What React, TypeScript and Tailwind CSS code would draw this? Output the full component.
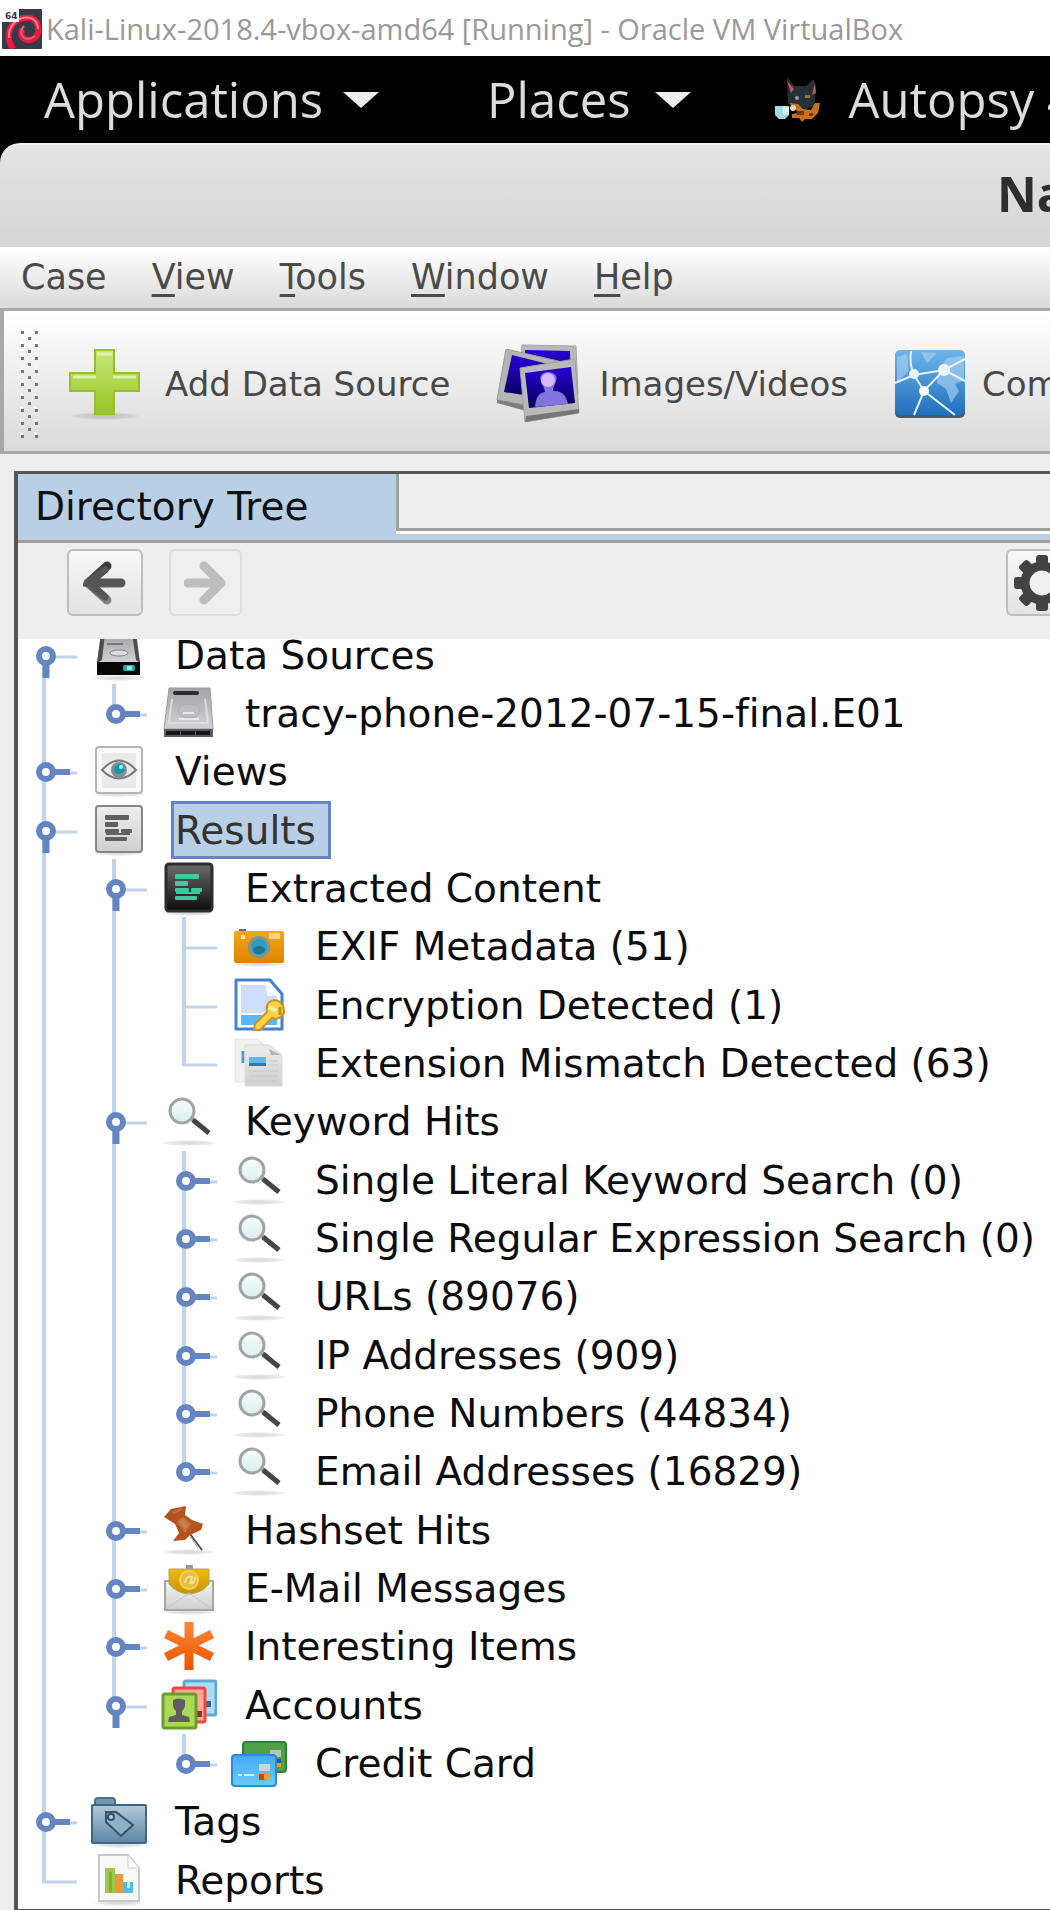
import React from "react";

type IconKey =
  | "drive" | "disk" | "eye" | "results" | "terminal" | "camera" | "key" | "docs"
  | "search" | "pin" | "mail" | "star" | "accounts" | "cards" | "tags" | "report";

type Connector = "open" | "closed" | "leaf";

interface Row {
  label: string;
  icon: IconKey;
  connector: Connector;
  guides: boolean[];
  last?: boolean;
  first?: boolean;
  selected?: boolean;
}

const rows: Row[] = [
  { label: "Data Sources", icon: "drive", connector: "open", guides: [], first: true },
  { label: "tracy-phone-2012-07-15-final.E01", icon: "disk", connector: "closed", guides: [true], last: true },
  { label: "Views", icon: "eye", connector: "closed", guides: [] },
  { label: "Results", icon: "results", connector: "open", guides: [], selected: true },
  { label: "Extracted Content", icon: "terminal", connector: "open", guides: [true] },
  { label: "EXIF Metadata (51)", icon: "camera", connector: "leaf", guides: [true, true] },
  { label: "Encryption Detected (1)", icon: "key", connector: "leaf", guides: [true, true] },
  { label: "Extension Mismatch Detected (63)", icon: "docs", connector: "leaf", guides: [true, true], last: true },
  { label: "Keyword Hits", icon: "search", connector: "open", guides: [true] },
  { label: "Single Literal Keyword Search (0)", icon: "search", connector: "closed", guides: [true, true] },
  { label: "Single Regular Expression Search (0)", icon: "search", connector: "closed", guides: [true, true] },
  { label: "URLs (89076)", icon: "search", connector: "closed", guides: [true, true] },
  { label: "IP Addresses (909)", icon: "search", connector: "closed", guides: [true, true] },
  { label: "Phone Numbers (44834)", icon: "search", connector: "closed", guides: [true, true] },
  { label: "Email Addresses (16829)", icon: "search", connector: "closed", guides: [true, true], last: true },
  { label: "Hashset Hits", icon: "pin", connector: "closed", guides: [true] },
  { label: "E-Mail Messages", icon: "mail", connector: "closed", guides: [true] },
  { label: "Interesting Items", icon: "star", connector: "closed", guides: [true] },
  { label: "Accounts", icon: "accounts", connector: "open", guides: [true], last: true },
  { label: "Credit Card", icon: "cards", connector: "closed", guides: [true, false], last: true },
  { label: "Tags", icon: "tags", connector: "closed", guides: [] },
  { label: "Reports", icon: "report", connector: "leaf", guides: [], last: true },
];

function Shadow({ y = 51 }: { y?: number }) {
  return <ellipse cx="28" cy={y} rx="28" ry="3" fill="url(#shadow)" />;
}

function TextLines({ fill }: { fill: string }) {
  return (
    <g fill={fill}>
      <rect x="14" y="13" width="24" height="5" rx="1" />
      <rect x="14" y="20" width="13" height="5" rx="1" />
      <rect x="14" y="27" width="14" height="4" rx="1" />
      <rect x="30" y="27" width="11" height="4" rx="1" />
      <rect x="15" y="31" width="24" height="2" />
      <rect x="14" y="35" width="22" height="4" rx="1" />
    </g>
  );
}

function Person({ x, y }: { x: number; y: number }) {
  return (
    <path
      d="M5 1 Q11 -2 17 1 Q18 9 14 12 L14 16 L21 18 L22 23 L0 23 L1 18 L8 16 L8 12 Q4 9 5 1Z"
      fill="#5f5c66"
      transform={`translate(${x} ${y})`}
    />
  );
}

const art: Record<IconKey, React.ReactNode> = {
  drive: (
    <>
      <Shadow />
      <path d="M10 6 L45 6 L49 36 L6 36Z" fill="url(#steel)" />
      <path d="M10 6 L14 6 L11 33 L6 36Z M45 6 L41 6 L45 33 L49 36Z" fill="#4b4b50" />
      <path d="M16 17h16" stroke="#77777b" strokeWidth="2" />
      <ellipse cx="28" cy="26" rx="9" ry="3" fill="#dcdce0" stroke="#85858a" />
      <path d="M6 35h43v13H6z" fill="#050607" />
      <rect x="32" y="38" width="12" height="6" rx="2" fill="#2fa9ab" />
      <rect x="36" y="39" width="5" height="4" fill="#7df0ea" />
    </>
  ),
  disk: (
    <>
      <path d="M8 3 L49 3 L52 44 L3 44Z" fill="url(#steel)" stroke="#9c9ca0" />
      <path d="M14 8h22" stroke="#2e2e31" strokeWidth="4" strokeLinecap="round" />
      <path d="M11 14 L8 38 L47 38 L44 14" fill="none" stroke="#dedee2" strokeWidth="2" />
      <ellipse cx="28" cy="26" rx="11" ry="7" fill="#bcbcc1" stroke="#aeaeb3" />
      <path d="M22 28h11M18 34h20" stroke="#e8e8eb" strokeWidth="2" />
      <path d="M3 44h49v8H3z" fill="#5c5c60" />
      <path d="M5 48h45" stroke="#161618" strokeWidth="4" strokeDasharray="14 1" />
    </>
  ),
  eye: (
    <>
      <Shadow />
      <rect x="5" y="4" width="46" height="46" rx="3" fill="#fafafa" stroke="#b4b4b4" strokeWidth="2" />
      <rect x="11" y="10" width="34" height="35" fill="#eaeaea" />
      <path d="M11 27 Q28 8 45 27 Q28 44 11 27Z" fill="#e8ecec" stroke="#757b7c" strokeWidth="2" />
      <circle cx="28" cy="27" r="8" fill="#858c8f" />
      <circle cx="28" cy="26" r="5" fill="#129ab2" />
      <circle cx="30" cy="24" r="2" fill="#9ff5ff" />
    </>
  ),
  results: (
    <>
      <Shadow />
      <rect x="5" y="4" width="46" height="46" rx="3" fill="url(#greybox)" stroke="#858585" strokeWidth="2" />
      <TextLines fill="#606060" />
    </>
  ),
  terminal: (
    <>
      <Shadow y={53} />
      <rect x="5" y="4" width="46" height="47" rx="3" fill="url(#darkbox)" stroke="#2d2d2d" strokeWidth="3" />
      <g transform="translate(0 1)"><TextLines fill="#3fc79d" /></g>
    </>
  ),
  camera: (
    <>
      <Shadow y={46} />
      <rect x="8" y="11" width="7" height="4" fill="#6e6a55" />
      <rect x="3" y="13" width="50" height="32" rx="2" fill="url(#orange)" />
      <rect x="38" y="15" width="11" height="6" rx="1" fill="#fbd28c" />
      <rect x="10" y="17" width="4" height="4" fill="#ffe5b0" />
      <circle cx="28" cy="29" r="11" fill="#7c9795" />
      <circle cx="28" cy="29" r="8" fill="#2f9bc0" />
      <ellipse cx="28" cy="32" rx="6" ry="4" fill="#1e7796" />
    </>
  ),
  key: (
    <>
      <path d="M5 3 H39 L51 17 V52 H5Z" fill="#fff" stroke="#4481cb" strokeWidth="3" strokeLinejoin="round" />
      <path d="M10 8 H34 L46 20 V36 H10Z" fill="#cddffc" />
      <path d="M10 38h36v10H10z" fill="#58b7f8" />
      <path d="M35 7 L46 19 H36Z" fill="#f5f9ff" />
      <path d="M24 47 L36 35 Q34 24 44 23 Q54 25 53 36 Q48 44 41 41 L29 53 H23Z" fill="#f7d442" stroke="#cf912b" strokeWidth="2" />
      <path d="M38 30 L45 34" stroke="#fff2a0" strokeWidth="4" />
      <path d="M49 30 v8" stroke="#c48736" strokeWidth="3" />
    </>
  ),
  docs: (
    <>
      <path d="M4 4 H26 L37 13 V47 H4Z" fill="#f1f1f1" stroke="#e2e2e2" />
      <path d="M12 16v12" stroke="#4b9fd0" strokeWidth="3" />
      <path d="M14 10 H38 L51 20 V51 H14Z" fill="url(#greybox)" stroke="#dadada" />
      <path d="M38 14 L40 20 L50 20" fill="#b5b5b5" />
      <path d="M18 22h17v9H18z" fill="#62b7e6" />
      <path d="M18 28h17v3H18z" fill="#39799e" />
      <path d="M37 26h10M37 30h10M18 36h29M18 41h29M18 46h29" stroke="#c6c6c6" strokeWidth="1" />
    </>
  ),
  search: (
    <>
      <Shadow y={50} />
      <path d="M30 25 L35 29" stroke="#999" strokeWidth="4" />
      <path d="M32 27 L48 40" stroke="#454545" strokeWidth="5" />
      <circle cx="21" cy="18" r="12" fill="url(#glass)" stroke="#a0a5a4" strokeWidth="3" />
    </>
  ),
  pin: (
    <>
      <Shadow y={50} />
      <path d="M29 32 L41 48" stroke="#555" strokeWidth="2" />
      <path d="M29 34 L37 46" stroke="#aaa" strokeWidth="1" />
      <path d="M3 15 L10 7 L25 4 L24 13 L31 18 L42 22 L40 28 L29 33 L24 38 L12 39 L18 31 L14 22Z" fill="#b4531e" />
      <path d="M12 11 L21 7 M17 20 L22 16 L29 22 L24 29Z" fill="#cb7e50" stroke="#c3703f" strokeWidth="2" />
    </>
  ),
  mail: (
    <>
      <Shadow y={52} />
      <rect x="4" y="21" width="48" height="29" fill="url(#paper)" stroke="#a5a5a5" strokeWidth="2" />
      <rect x="25" y="5" width="7" height="4" fill="#999" />
      <path d="M8 9 H48 V24 Q41 33 28 34 Q15 33 8 24Z" fill="url(#gold)" stroke="#b8a356" strokeWidth="1" />
      <circle cx="28" cy="20" r="9" fill="#e6bd36" stroke="#efd06a" strokeWidth="2" />
      <path d="M24 23 Q25 15 31 17 L29 23 Q34 24 34 17" fill="none" stroke="#f8e294" strokeWidth="2" />
      <path d="M5 49 L28 33 L51 49" fill="none" stroke="#c3c3c3" strokeWidth="1" />
    </>
  ),
  star: (
    <path
      d="M28 4 V52 M5 16 L51 39 M51 16 L5 39"
      stroke="url(#flame)" strokeWidth="9" fill="none"
    />
  ),
  accounts: (
    <>
      <rect x="23" y="4" width="32" height="34" rx="2" fill="#a9ddf7" stroke="#5da7d2" strokeWidth="3" />
      <rect x="44" y="24" width="6" height="6" fill="#38677e" />
      <rect x="12" y="11" width="32" height="34" rx="2" fill="#ffa898" stroke="#f3473d" strokeWidth="3" />
      <rect x="35" y="34" width="6" height="6" fill="#7a3a3a" />
      <rect x="2" y="17" width="33" height="34" rx="2" fill="#aada55" stroke="#6b9c2d" strokeWidth="3" />
      <Person x={7} y={22} />
    </>
  ),
  cards: (
    <>
      <rect x="12" y="7" width="43" height="30" rx="3" fill="#4da248" stroke="#2d8033" strokeWidth="2" />
      <rect x="39" y="15" width="11" height="7" fill="#b4c8b3" />
      <path d="M45 24h5v4h-5z" fill="#1f55a0" />
      <path d="M45 28h5v4h-5z" fill="#f0a020" />
      <rect x="1" y="20" width="44" height="31" rx="3" fill="url(#bluecard)" stroke="#3389cd" strokeWidth="2" />
      <rect x="28" y="29" width="11" height="7" fill="#ccd4d8" />
      <path d="M28 39h5v6h-5z" fill="#d83e15" />
      <path d="M33 39h6v6h-6z" fill="#f3a41c" />
      <path d="M7 40h4M13 40h10" stroke="#d5f1ff" strokeWidth="2" />
    </>
  ),
  tags: (
    <>
      <Shadow y={52} />
      <path d="M4 13 V8 Q4 5 7 5 H21 Q24 5 24 8 V13Z" fill="#7397b0" stroke="#4c6f8b" strokeWidth="2" />
      <rect x="1" y="12" width="54" height="38" rx="1" fill="url(#folder)" stroke="#3f6785" strokeWidth="2" />
      <path d="M15 19 H25 L42 32 L30 43 L15 29Z" fill="#8fb1c8" stroke="#35536b" strokeWidth="2" />
      <circle cx="20" cy="24" r="3" fill="#bcd3e2" stroke="#35536b" strokeWidth="2" />
    </>
  ),
  report: (
    <>
      <Shadow y={51} />
      <path d="M8 3 H37 L48 16 V49 H8Z" fill="#f8f8f8" stroke="#c8c8c8" strokeWidth="2" />
      <path d="M37 3 V16 H48Z" fill="#fff" stroke="#d0d0d0" strokeWidth="1" />
      <path d="M14 16h10v25H14z" fill="#9cc84b" />
      <path d="M18 20h3v21h-3z" fill="#86b02c" />
      <path d="M24 22h8v19h-8z" fill="#e79a3b" />
      <path d="M32 30h10v11H32z" fill="#4fbfdf" />
      <path d="M36 30h3v6h-3z" fill="#b9ecf8" />
    </>
  ),
};

function Gradients() {
  const stops: [string, string, string][] = [
    ["steel", "#a2a2a7", "#d2d2d6"],
    ["greybox", "#ededed", "#cfcfcf"],
    ["darkbox", "#6d6d6d", "#0b0b0b"],
    ["orange", "#f2a71d", "#dc8400"],
    ["glass", "#f7fdfd", "#d8eeee"],
    ["paper", "#f3f3f3", "#cfcfcf"],
    ["gold", "#f0bb0e", "#c99200"],
    ["bluecard", "#42acf0", "#6dc9ff"],
    ["folder", "#b3cbdb", "#5a86a6"],
    ["plus", "#c9e67c", "#97c622"],
    ["photo", "#2a00d6", "#02005a"],
    ["globe", "#6fb4ea", "#1f6fbb"],
    ["arrow", "#3a3a3a", "#808080"],
  ];
  return (
    <svg className="absolute h-0 w-0" aria-hidden="true">
      <defs>
        {stops.map(([id, a, b]) => (
          <linearGradient key={id} id={id} x1="0" y1="0" x2="0" y2="1">
            <stop offset="0" stopColor={a} />
            <stop offset="1" stopColor={b} />
          </linearGradient>
        ))}
        <linearGradient id="flame" gradientUnits="userSpaceOnUse" x1="0" y1="4" x2="0" y2="52">
          <stop offset="0" stopColor="#fd8634" />
          <stop offset="1" stopColor="#e85500" />
        </linearGradient>
        <radialGradient id="shadow">
          <stop offset="0" stopColor="#000" stopOpacity="0.16" />
          <stop offset="0.7" stopColor="#000" stopOpacity="0.09" />
          <stop offset="1" stopColor="#000" stopOpacity="0" />
        </radialGradient>
      </defs>
    </svg>
  );
}

function Guide({ line }: { line: boolean }) {
  return (
    <svg className="h-full w-[70px] shrink-0" aria-hidden="true">
      {line && <line x1="23" x2="23" y1="0" y2="100%" stroke="#bfd4e9" strokeWidth="4" />}
    </svg>
  );
}

function Handle({ row }: { row: Row }) {
  const drawing = (
    <svg className="h-full w-[70px]" aria-hidden="true">
      <line x1="23" x2="23" y1={row.first ? 30 : 0} y2={row.last ? 32 : "100%"} stroke="#bfd4e9" strokeWidth="4" />
      <line x1="22" x2="56" y1="31" y2="31" stroke="#bfd4e9" strokeWidth="3" />
      {row.connector !== "leaf" && (
        <>
          <circle cx="25" cy="30" r="7" fill="#fff" stroke="#6484c2" strokeWidth="6" />
          {row.connector === "open" ? (
            <path d="M25 36v16" stroke="#6484c2" strokeWidth="7" />
          ) : (
            <path d="M31 30h18" stroke="#6484c2" strokeWidth="6" />
          )}
        </>
      )}
    </svg>
  );
  if (row.connector === "leaf") return <span className="h-full shrink-0">{drawing}</span>;
  return (
    <button type="button" className="h-full shrink-0" aria-label={`Toggle ${row.label}`}>
      {drawing}
    </button>
  );
}

function TreeRow({ row }: { row: Row }) {
  return (
    <li
      role="treeitem"
      aria-level={row.guides.length + 1}
      aria-selected={!!row.selected}
      className="flex h-[58px] items-stretch nth-[3n]:h-[59px]"
    >
      {row.guides.map((line, i) => (
        <Guide key={i} line={line} />
      ))}
      <Handle row={row} />
      <svg className="mt-px h-14 w-14 shrink-0" viewBox="0 0 56 56" aria-hidden="true">
        {art[row.icon]}
      </svg>
      <span
        className={
          row.selected
            ? "ml-6 flex items-center border-3 border-[#6484c2] bg-[#b8cfe5] pr-3 pl-px text-[#333]"
            : "ml-7 flex items-center text-[#0c0c0c]"
        }
      >
        {row.label}
      </span>
    </li>
  );
}

function MenuItem({ label, accel = true }: { label: string; accel?: boolean }) {
  return (
    <button type="button" className="whitespace-nowrap">
      {accel ? (
        <>
          <span className="underline decoration-3 underline-offset-[5px]">{label[0]}</span>
          {label.slice(1)}
        </>
      ) : (
        label
      )}
    </button>
  );
}

function Caret() {
  return (
    <svg className="h-4 w-9" viewBox="0 0 36 16" aria-hidden="true">
      <path d="M0 0H36L18 16Z" fill="#eeeeec" />
    </svg>
  );
}

function KaliIcon() {
  return (
    <svg className="h-10 w-10 shrink-0" viewBox="0 0 40 40" aria-hidden="true">
      <rect width="40" height="40" rx="1" fill="#363b48" />
      <path
        d="M11 40 Q3 27 10 16 Q18 7 29 9 Q38 13 36 24 Q33 32 25 31 Q17 28 20 20"
        fill="none" stroke="#f0173f" strokeWidth="6"
      />
      <path d="M7 29 Q6 20 13 13 Q22 6 31 10 Q36 14 36 20" fill="none" stroke="#ff8990" strokeWidth="2" />
      <path d="M22 17 Q17 23 21 28 Q27 32 33 27" fill="none" stroke="#ff5b70" strokeWidth="2" />
      <rect width="17" height="13" fill="#fff" />
      <text x="3" y="10" fontSize="9" fontWeight="700" fontFamily="DejaVu Sans, sans-serif" fill="#363b48">64</text>
    </svg>
  );
}

function DogIcon() {
  return (
    <svg className="h-14 w-14 shrink-0" viewBox="0 0 56 56" aria-hidden="true">
      <path d="M18 5 L25 14 H37 L45 7 L46 34 L37 37 L19 31Z" fill="#253139" />
      <path d="M18 9 L25 17 L22 21Z M46 10 L43 23 L47 21Z" fill="#bd5b53" />
      <path d="M36 23h5v3h-5z" fill="#a87025" />
      <circle cx="28" cy="26" r="2" fill="#95a1a0" />
      <path d="M20 31 L29 32 L34 37 L42 38 L46 31 H51 L49 41 L43 47 H36 L33 50 L30 46 H23 V42 L30 41Z" fill="#c87019" />
      <path d="M28 39h7v4h-7z M40 41h4v3h-4z" fill="#7c330f" />
      <path d="M6 34 H20 V43 L16 47 H10 L6 43Z" fill="#9cdde6" />
      <path d="M14 35 H20 V42 L14 43Z" fill="#d6f4f6" />
      <circle cx="24" cy="36" r="3" fill="#e8ddcb" />
    </svg>
  );
}

function PlusIcon() {
  return (
    <svg className="h-[72px] w-[72px] shrink-0" viewBox="0 0 72 72" aria-hidden="true">
      <ellipse cx="36" cy="68" rx="36" ry="4" fill="url(#shadow)" />
      <path d="M26 2H45V25H70V43H45V66H26V43H1V25H26Z" fill="url(#plus)" stroke="#96be35" strokeWidth="2" />
      <path d="M28 6H43M4 29H27M44 29H67" stroke="#dff1ab" strokeWidth="3" />
    </svg>
  );
}

function PhotosIcon() {
  return (
    <svg className="h-[84px] w-[88px] shrink-0" viewBox="0 0 88 84" aria-hidden="true">
      <path d="M27 3 L81 4 L83 52 L24 48Z" fill="#b9b9b9" stroke="#a5a5a5" />
      <path d="M30 8 L75 9 L76 45 L31 42Z" fill="url(#photo)" />
      <path d="M11 7 L72 21 L62 68 L2 58Z" fill="#b5b5b5" stroke="#9a9a9a" />
      <path d="M17 13 L65 25 L55 57 L9 50Z" fill="url(#photo)" />
      <path d="M2 58 L30 63 L31 69 L2 61Z" fill="#7d7d7d" />
      <path d="M25 26 L80 17 L84 71 L30 80Z" fill="#b9b9b9" stroke="#a0a0a0" />
      <path d="M30 31 L76 25 L80 61 L34 66Z" fill="url(#photo)" />
      <path d="M31 74 L84 67 L84 71 L30 80Z" fill="#777" />
      <path d="M40 65 Q41 51 50 50 L49 46 Q40 31 53 30 Q67 31 58 46 L58 49 Q70 48 73 62Z" fill="#8274dc" />
      <circle cx="53" cy="38" r="7" fill="#d4b9ff" />
    </svg>
  );
}

function NetworkIcon() {
  return (
    <svg className="h-[70px] w-[72px] shrink-0" viewBox="0 0 72 70" aria-hidden="true">
      <rect x="1" y="3" width="70" height="66" rx="5" fill="#4b5964" />
      <rect x="1" y="1" width="70" height="65" rx="5" fill="url(#globe)" />
      <path d="M27 3 L43 4 L33 14Z M44 21 L53 9 L70 7 V31 L61 35 L65 42 L57 54 L52 40 L43 34Z M3 8 L13 5 L15 22 L3 34Z" fill="#a9d0ee" opacity="0.65" />
      <path d="M17 2 Q15 15 20 26 L50 21 L71 10 M50 21 L71 32 M50 21 L30 42 L20 26 M1 34 L20 26 M30 42 L20 66 M30 42 L61 66" fill="none" stroke="#e5f4ff" strokeWidth="2" />
      <circle cx="20" cy="25" r="5" fill="#e7f5ff" />
      <circle cx="50" cy="21" r="6" fill="#edf8ff" />
      <circle cx="30" cy="42" r="5" fill="#f5fbff" />
    </svg>
  );
}

function Grip() {
  return (
    <svg className="h-[108px] w-5 shrink-0" aria-hidden="true">
      {Array.from({ length: 9 }, (_, i) => (
        <g key={i}>
          <path d={`M0 ${i * 13}h3M14 ${i * 13}h3`} stroke="#fff" strokeWidth="3" />
          <rect x="1" y={i * 13 + 1} width="3" height="3" fill="#777" />
          <rect x="15" y={i * 13 + 1} width="3" height="3" fill="#777" />
          {i < 8 && <rect x="8" y={i * 13 + 7} width="3" height="3" fill="#777" />}
        </g>
      ))}
    </svg>
  );
}

function Gear() {
  return (
    <svg className="h-14 w-14 shrink-0" viewBox="-28 -28 56 56" aria-hidden="true">
      {[0, 45, 90, 135].map((angle) => (
        <rect key={angle} x="-6" y="-28" width="12" height="56" rx="3" fill="#424242" transform={`rotate(${angle})`} />
      ))}
      <circle r="17" fill="#efefef" stroke="#424242" strokeWidth="9" />
    </svg>
  );
}

export default function App() {
  return (
    <div className="flex min-h-screen w-full flex-col overflow-hidden bg-[#eeeeee] font-['DejaVu_Sans',sans-serif]">
      <Gradients />
      <header className="flex h-14 shrink-0 items-center gap-1 bg-white pt-px pl-0.5 font-['Open_Sans',sans-serif] text-[29px] whitespace-nowrap text-[#999]">
        <KaliIcon />
        <h1>Kali-Linux-2018.4-vbox-amd64 [Running] - Oracle VM VirtualBox</h1>
      </header>

      <div className="bg-black">
        <nav className="flex h-[87px] items-center overflow-hidden pl-11 font-['Open_Sans',sans-serif] text-[49px] whitespace-nowrap text-[#dcdcdc]">
          <button type="button" className="flex items-center gap-5">
            Applications <Caret />
          </button>
          <button type="button" className="ml-[108px] flex items-center gap-6">
            Places <Caret />
          </button>
          <button type="button" className="ml-[78px] flex items-center gap-6">
            <DogIcon />
            Autopsy 4
          </button>
        </nav>
        <div className="flex h-[104px] items-center justify-end overflow-hidden rounded-tl-[20px] border-t-2 border-[#f2f2f2] bg-linear-to-b from-[#e4e4e4] to-[#d5d5d5] pb-1 font-['Open_Sans',sans-serif] text-[49px] font-bold text-[#2e2e2e]">
          <span className="w-[53px]">Na</span>
        </div>
      </div>

      <nav className="flex h-[64px] shrink-0 items-center gap-[45px] border-b-3 border-[#a8a8a8] bg-linear-to-b from-white to-[#dadada] pl-[21px] text-[35px] text-[#4a4a4a]">
        <MenuItem label="Case" accel={false} />
        <MenuItem label="View" />
        <MenuItem label="Tools" />
        <MenuItem label="Window" />
        <MenuItem label="Help" />
      </nav>

      <div className="flex h-[143px] shrink-0 items-center overflow-hidden border-b-3 border-l-4 border-[#a8a8a8] bg-linear-to-b from-white to-[#dadada] pt-1.5 pl-4 text-[34px] whitespace-nowrap text-[#484848]">
        <Grip />
        <button type="button" className="ml-[29px] flex items-center gap-6">
          <PlusIcon />
          Add Data Source
        </button>
        <button type="button" className="ml-[45px] flex items-center gap-4">
          <PhotosIcon />
          Images/Videos
        </button>
        <button type="button" className="ml-[46px] flex items-center gap-4">
          <NetworkIcon />
          Com
        </button>
      </div>

      <main className="mt-[17px] ml-3.5 flex grow flex-col overflow-hidden border-t-3 border-b-2 border-l-4 border-[#555] bg-white">
        <div className="flex h-[69px] shrink-0 border-b-3 border-[#a0a0a0] bg-[#b8cfe5]">
          <button type="button" className="mt-1 w-[378px] bg-[#b8cfe5] pb-1.5 pl-[17px] text-left text-[39px] leading-none text-[#101010]">
            Directory Tree
          </button>
          <div className="h-[57px] grow border-b-3 border-l-3 border-[#a0a0a0] bg-[#eeeeee] shadow-[0_3px_0_#fff]" />
        </div>
        <div className="flex h-24 shrink-0 items-center overflow-hidden bg-[#eeeeee] pb-[17px] pl-[49px]">
          <button type="button" aria-label="Back" className="flex h-[67px] w-[76px] items-center justify-center rounded-md border-2 border-[#bdbdbd] bg-linear-to-b from-[#f8f8f8] to-[#e2e2e2]">
            <svg className="h-11 w-11" viewBox="0 0 44 44" aria-hidden="true">
              <path d="M24 5L5 22L24 39M5 22H38" fill="none" stroke="url(#arrow)" strokeWidth="9" strokeLinecap="round" strokeLinejoin="round" />
              <path d="M22 9L6 22H38M6 22L22 36" fill="none" stroke="#555" strokeWidth="7" strokeLinecap="round" />
            </svg>
          </button>
          <button type="button" aria-label="Forward" disabled className="ml-[26px] flex h-[67px] w-[73px] items-center justify-center rounded-md border-2 border-[#dddddd] bg-[#efefef]">
            <svg className="h-11 w-11" viewBox="0 0 44 44" aria-hidden="true">
              <path d="M20 5L37 22L20 39M4 22H36" fill="none" stroke="#bebebe" strokeWidth="9" strokeLinecap="round" strokeLinejoin="round" />
            </svg>
          </button>
          <button type="button" aria-label="Settings" className="-mr-[26px] ml-auto flex h-[67px] w-[70px] shrink-0 items-center justify-start rounded-md border-2 border-[#bdbdbd] bg-linear-to-b from-[#f8f8f8] to-[#e2e2e2] pl-1.5">
            <Gear />
          </button>
        </div>
        <div className="overflow-hidden">
          <ul role="tree" aria-label="Directory Tree" className="-mt-[13px] pl-[3px] text-[39px] leading-none whitespace-nowrap [font-variant-ligatures:none]">
            {rows.map((row) => (
              <TreeRow key={row.label} row={row} />
            ))}
          </ul>
        </div>
      </main>
    </div>
  );
}
